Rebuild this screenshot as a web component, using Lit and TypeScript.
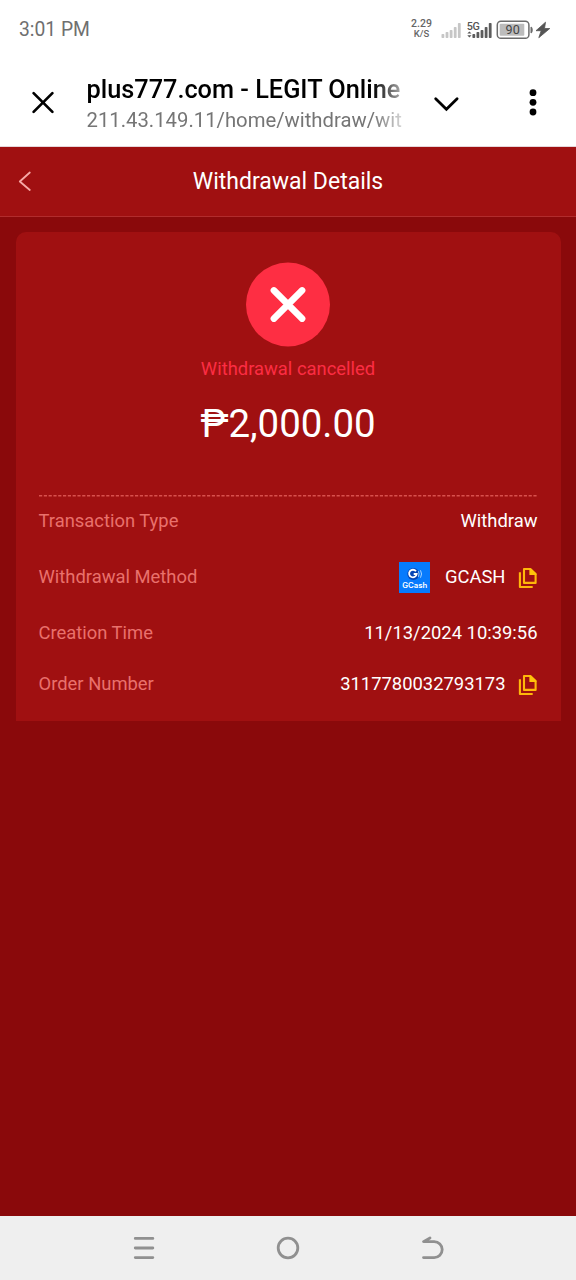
import { LitElement, html, css, svg } from "lit";
import { customElement } from "lit/decorators.js";

const copyIcon = html`<svg class="copy" width="20" height="22" viewBox="0 0 20 22">
  <path d="M1.9 5.2V20h12.8" fill="none" stroke="#ffb70a" stroke-width="2.1" stroke-linejoin="round"/>
  <path d="M6 2H12.4L17.6 7V15.9H6Z" fill="none" stroke="#ffb70a" stroke-width="2.1" stroke-linejoin="round"/>
  <path d="M11.4 1.4h1.4l5.6 5.4v1.2H11.4Z" fill="#ffc40a"/>
</svg>`;

const bars = (x: number, color: string, heights: number[]) =>
  heights.map((h, i) => svg`<rect x=${x + i * 4.1} y=${20 - h} width="2.8" height=${h} rx="0.8" fill=${color}/>`);

@customElement("app-root")
export class AppRoot extends LitElement {
  static styles = css`
    :host { display: flex; flex-direction: column; width: 576px; height: 1280px; overflow: hidden;
      background: #8a090b; font-family: Roboto, sans-serif; box-sizing: border-box; }
    * { box-sizing: border-box; }
    svg { display: block; flex: none; }
    .status { height: 60px; background: #fff; display: flex; justify-content: space-between; align-items: center;
      padding: 0 24px 0 19px; color: #6f6f6f; font-size: 19.3px; }
    .time { padding-bottom: 1px; }
    .indicators { display: flex; align-items: center; }
    .speed { width: 23px; font-size: 10.5px; line-height: 10px; font-weight: 500; text-align: center; color: #666; margin-right: 6px; white-space: nowrap; padding-bottom: 2px; }
    .speed small { display: block; font-size: 9.5px; }
    .toolbar { height: 87px; background: #fff; display: flex; align-items: center; padding: 0 34px 0 31px; border-bottom: 1px solid #e5d6da; }
    .page { width: 317px; margin-left: 31.5px; white-space: nowrap; padding-top: 4px;
      -webkit-mask-image: linear-gradient(90deg, #000 286px, transparent 328px);
      mask-image: linear-gradient(90deg, #000 286px, transparent 328px); }
    .title { font-size: 25.3px; line-height: 30px; font-weight: 500; color: #000; }
    .url { font-size: 20.3px; line-height: 30px; color: #757575; }
    .chevron { margin-left: 27.5px; }
    .dots { margin-left: auto; margin-right: 5px; }
    .header { height: 70px; background: #a01011; border-bottom: 1px solid #b12c2d; display: grid;
      grid-template-columns: 60px 1fr 60px; align-items: center; padding: 0 18px; color: #fff; font-size: 23px; text-align: center; }
    .back { margin-bottom: 1px; }
    .content { flex: 1; padding: 15px 15.5px; }
    .card { height: 489px; background: #a01011; border-radius: 10px 10px 0 0; padding: 30px 23px 0; }
    .result { display: flex; flex-direction: column; align-items: center; height: 233px; }
    .message { margin-top: 8px; line-height: 28px; font-size: 18.4px; color: #fc2d43; }
    .amount { margin-top: 17px; line-height: 48px; font-size: 38.4px; color: #fff; }
    .rows { margin-top: -2.5px; }
    .row { display: flex; align-items: center; justify-content: space-between; height: 51px; font-size: 18.4px; white-space: nowrap; }
    .method { height: 61px; }
    .label { color: #e9716c; }
    .value { display: flex; align-items: center; color: #fff; }
    .copy { margin: 3px 0 0 12px; }
    .logo { margin: 3px 15px 0 0; }
    .nav { height: 64px; background: #efefef; display: flex; align-items: center; justify-content: space-between; padding: 0 132px; }
  `;

  render() {
    return html`
      <div class="status">
        <span class="time">3:01 PM</span>
        <div class="indicators">
          <div class="speed">2.29<small>K/S</small></div>
          <svg width="113" height="24" viewBox="439 17 113 24" font-family="Roboto, sans-serif">
            <g transform="translate(0 17)">${bars(441.5, "#c6c6c6", [4, 6, 8, 11, 15])}</g>
            <text x="466.8" y="28.7" font-size="10.8" font-weight="500" fill="#555" textLength="13">5G</text>
            <path d="M467.3 32.6 469.4 30.4 471.5 32.6ZM467.3 34.2 469.4 36.6 471.5 34.2Z" fill="#555"/>
            <g transform="translate(0 17)">${bars(472.4, "#5c5c5c", [4, 6, 8, 11, 15])}</g>
            <rect x="497.3" y="20.3" width="31.6" height="17" rx="3.6" fill="#fff" stroke="#6c6c6c" stroke-width="1.5"/>
            <rect x="499.7" y="22.8" width="24.6" height="12" rx="1" fill="#bcbcbc"/>
            <path d="M531 26c1.6 0 1.6 6 0 6Z" fill="#6c6c6c" stroke="#6c6c6c"/>
            <text x="505.5" y="33.3" font-size="12.6" fill="#444" textLength="14.3">90</text>
            <path d="M545.5 21.2 536 29.7h5.2L538.8 36.7 549.8 27.5H544.5Z" fill="#555" stroke="#555" stroke-width=".8" stroke-linejoin="round"/>
          </svg>
        </div>
      </div>
      <div class="toolbar">
        <svg width="24" height="24" viewBox="31 90.7 24 24"><path d="M33.6 92.8 52.4 111.6M52.4 92.8 33.6 111.6" stroke="#000" stroke-width="2.7" stroke-linecap="round"/></svg>
        <div class="page">
          <div class="title">plus777.com - LEGIT Online</div>
          <div class="url">211.43.149.11/home/withdraw/wit</div>
        </div>
        <svg class="chevron" width="30" height="20" viewBox="431 94 30 20"><path d="M435.7 99.8 446.4 110.3 457.1 99.8" fill="none" stroke="#000" stroke-width="2.8" stroke-linecap="round"/></svg>
        <svg class="dots" width="8" height="28" viewBox="0 .5 8 28"><circle cx="4" cy="4.2" r="3.4"/><circle cx="4" cy="13.8" r="3.4"/><circle cx="4" cy="23.5" r="3.4"/></svg>
      </div>
      <div class="header">
        <svg class="back" width="14" height="22" viewBox="0 0 14 22"><path d="M11.8 2.5 1.8 11.5 11.8 20" fill="none" stroke="#f7a9a6" stroke-width="1.8" stroke-linecap="round" stroke-linejoin="round"/></svg>
        <span>Withdrawal Details</span>
      </div>
      <div class="content">
        <div class="card">
          <div class="result">
            <svg width="84" height="85" viewBox=".5 0 84 85"><circle cx="42.5" cy="42.5" r="42" fill="#fe2e43"/><path d="M28.4 28.4 56.6 56.6M56.6 28.4 28.4 56.6" stroke="#fff" stroke-width="6.6" stroke-linecap="round"/></svg>
            <div class="message">Withdrawal cancelled</div>
            <div class="amount">₱2,000.00</div>
          </div>
          <svg width="499" height="2" viewBox="0 0 499 2"><path d="M0 .8H499" stroke="#d8504d" stroke-width="1.5" stroke-dasharray="3.2 1.6"/></svg>
          <div class="rows">
            <div class="row"><span class="label">Transaction Type</span><span class="value">Withdraw</span></div>
            <div class="row method"><span class="label">Withdrawal Method</span>
              <span class="value">
                <svg class="logo" width="31" height="31" viewBox="0 0 31 31">
                  <rect width="31" height="31" fill="#077bfd"/>
                  <circle cx="14.3" cy="12" r="6" fill="#0643b4"/>
                  <path d="M17 9.3A3.8 3.8 0 1 0 17.7 12H14.7" fill="none" stroke="#fff" stroke-width="1.8"/>
                  <path d="M19.4 9.2Q20.7 12 19.4 14.8M21.5 8.3Q23.6 12 21.5 15.7" fill="none" stroke="#a8d4ff" stroke-width="1"/>
                  <text x="3.2" y="26.3" font-size="7.2" font-weight="600" fill="#fff" font-family="Inter, sans-serif" textLength="25" lengthAdjust="spacingAndGlyphs">GCash</text>
                </svg>GCASH${copyIcon}
              </span></div>
            <div class="row"><span class="label">Creation Time</span><span class="value">11/13/2024 10:39:56</span></div>
            <div class="row"><span class="label">Order Number</span><span class="value">3117780032793173${copyIcon}</span></div>
          </div>
        </div>
      </div>
      <div class="nav">
        <svg width="24" height="26" viewBox="132 1235 24 26"><path d="M135.3 1238.4H152.8M135.3 1248H152.8M135.3 1257.6H152.8" stroke="#909090" stroke-width="2.9" stroke-linecap="round"/></svg>
        <svg width="24" height="26" viewBox="0 0 24 26"><circle cx="12" cy="13" r="9.8" fill="none" stroke="#909090" stroke-width="2.8"/></svg>
        <svg width="24" height="26" viewBox="420 1235 24 26"><path d="M423.5 1257.6H434.2A8 8 0 0 0 434.2 1241.6H423.5L430 1238" fill="none" stroke="#909090" stroke-width="2.8" stroke-linecap="round" stroke-linejoin="round"/></svg>
      </div>`;
  }
}
